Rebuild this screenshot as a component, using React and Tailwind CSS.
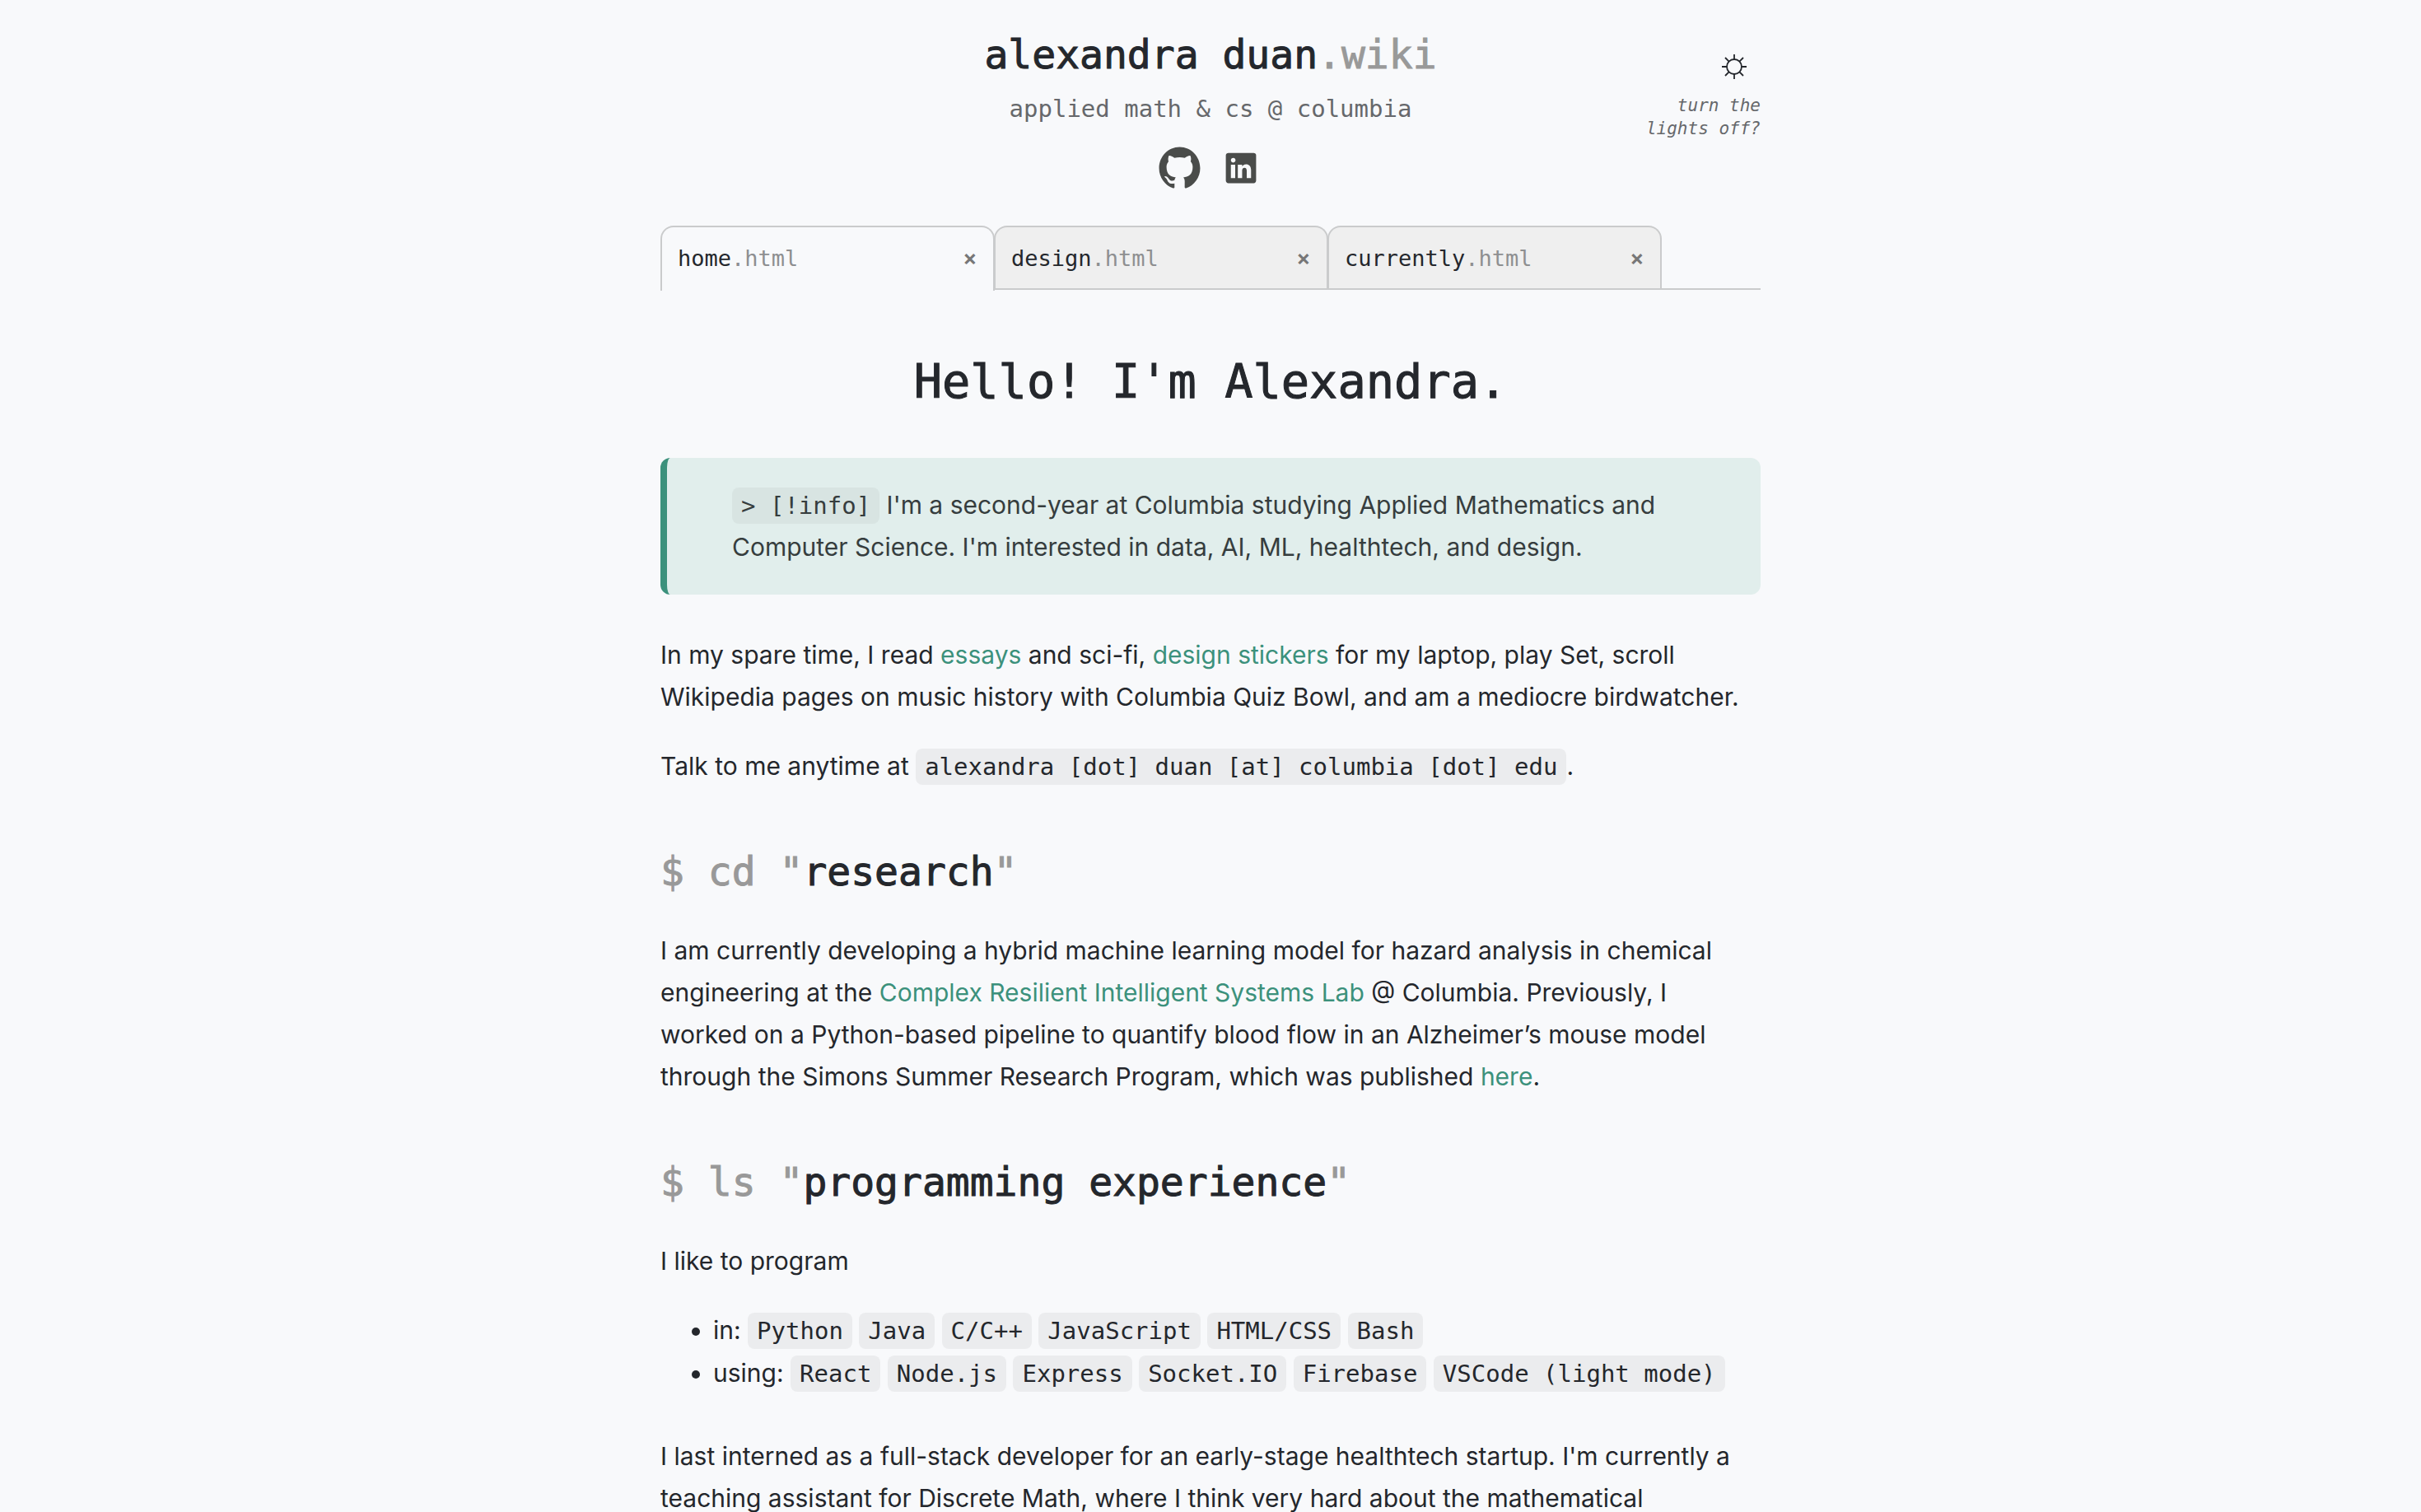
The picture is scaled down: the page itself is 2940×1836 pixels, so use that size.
import { IoLogoGithub, IoLogoLinkedin } from "react-icons/io5";

function Code({ children, tint = "bg-black/5" }) {
  return (
    <code className={`rounded-[8px] px-[11px] py-[5px] font-['DejaVu_Sans_Mono',monospace] text-[29px] leading-none ${tint}`}>
      {children}
    </code>
  );
}

function TextLink({ children }) {
  return (
    <a href="#" className="text-[#3c917c]">
      {children}
    </a>
  );
}

function Heading({ command, children }) {
  return (
    <h2 className="mt-18 mb-[41px] font-['DejaVu_Sans_Mono',monospace] text-5xl leading-[60px] [-webkit-text-stroke:1px]">
      <span className="text-[#999]">$ {command} "</span>
      {children}
      <span className="text-[#999]">"</span>
    </h2>
  );
}

function SunMark() {
  return (
    <svg viewBox="0 0 30 30" className="size-[30px]" fill="none" stroke="currentColor" strokeWidth="1.8" aria-hidden="true">
      <circle cx="15" cy="15" r="9" />
      <path d="M15 0v6M15 24v6M0 15h6M24 15h6M4 4l4.6 4.6M21.4 21.4L26 26M4 26l4.6-4.6M21.4 8.6L26 4" />
    </svg>
  );
}

const tabs = ["home", "design", "currently"];
const languages = ["Python", "Java", "C/C++", "JavaScript", "HTML/CSS", "Bash"];
const tools = ["React", "Node.js", "Express", "Socket.IO", "Firebase", "VSCode (light mode)"];

function SkillRow({ label, items }) {
  return (
    <li className="leading-[52px]">
      {label}:
      {items.map((item) => (
        <span key={item}>
          {" "}
          <Code>{item}</Code>
        </span>
      ))}
    </li>
  );
}

export default function App() {
  return (
    <div className="h-screen overflow-hidden bg-[#f8f9fb] font-['Inter',sans-serif] text-[30px] leading-[51px] text-[#24272c]">
      <div className="mx-auto max-w-[1336px]">
        <header className="grid grid-cols-[1fr_auto_1fr] pt-9 font-['DejaVu_Sans_Mono',monospace]">
          <div />
          <div className="flex flex-col items-center">
            <div className="text-5xl leading-[60px] [-webkit-text-stroke:1px]">
              alexandra duan<span className="text-[#999]">.wiki</span>
            </div>
            <p className="mt-4 text-[29px] leading-[40px] text-[#66686b]">applied math &amp; cs @ columbia</p>
            <nav className="mt-[23px] flex items-center gap-[25px] pr-[7px] text-[#4a4c4a]">
              <a href="#" aria-label="GitHub">
                <IoLogoGithub size={57} />
              </a>
              <a href="#" aria-label="LinkedIn">
                <IoLogoLinkedin size={42} />
              </a>
            </nav>
          </div>
          <button
            type="button"
            className="mt-[30px] flex w-[160px] flex-col items-end self-start justify-self-end text-right text-[21px] leading-[28px] text-[#66686b] italic"
          >
            <span className="mr-[17px] mb-[18px] text-[#24272c]">
              <SunMark />
            </span>
            turn the lights off?
          </button>
        </header>

        <nav className="mt-[42px] flex h-[78px] border-b-2 border-[#cacbcc] text-[27px]">
          {tabs.map((tab, i) => (
            <div
              key={tab}
              className={`-ml-px flex w-[406px] items-center justify-between rounded-t-[16px] border-2 border-b-0 border-[#cacbcc] pr-5 pl-[19px] font-['DejaVu_Sans_Mono',monospace] first:ml-0 ${
                i === 0 ? "-mb-[3px] bg-[#f8f9fb] pb-[3px]" : "bg-[#efefef]"
              }`}
            >
              <a href="#">
                {tab}
                <span className="text-[#8e8f91]">.html</span>
              </a>
              <button type="button" aria-label={`Close ${tab}.html`} className="font-bold text-[#777]">
                ×
              </button>
            </div>
          ))}
        </nav>

        <main>
          <h1 className="mt-[75px] text-center font-['DejaVu_Sans_Mono',monospace] text-[57px] leading-[72px] [-webkit-text-stroke:1px]">
            Hello! I'm Alexandra.
          </h1>
          <blockquote className="mt-[57px] rounded-[12px] border-l-8 border-[#3c917c] bg-[#e1eeec] px-[79px] py-8 text-[#363d3e]">
            <Code tint="bg-black/4">&gt; [!info]</Code> I'm a second-year at Columbia studying Applied Mathematics and
            Computer Science. I'm interested in data, AI, ML, healthtech, and design.
          </blockquote>
          <p className="mt-12">
            In my spare time, I read <TextLink>essays</TextLink> and sci-fi, <TextLink>design stickers</TextLink> for my
            laptop, play Set, scroll Wikipedia pages on music history with Columbia Quiz Bowl, and am a mediocre
            birdwatcher.
          </p>
          <p className="mt-[33px]">
            Talk to me anytime at <Code>alexandra [dot] duan [at] columbia [dot] edu</Code>.
          </p>

          <Heading command="cd">research</Heading>
          <p className="pr-4">
            I am currently developing a hybrid machine learning model for hazard analysis in chemical engineering at the{" "}
            <TextLink>Complex Resilient Intelligent Systems Lab</TextLink> @ Columbia. Previously, I worked on a
            Python-based pipeline to quantify blood flow in an Alzheimer’s mouse model through the Simons Summer
            Research Program, which was published <TextLink>here</TextLink>.
          </p>

          <Heading command="ls">programming experience</Heading>
          <p>I like to program</p>
          <ul className="mt-8 list-disc pl-16">
            <SkillRow label="in" items={languages} />
            <SkillRow label="using" items={tools} />
          </ul>
          <p className="mt-[50px]">
            I last interned as a full-stack developer for an early-stage healthtech startup. I'm currently a teaching
            assistant for Discrete Math, where I think very hard about the mathematical
          </p>
        </main>
      </div>
    </div>
  );
}
